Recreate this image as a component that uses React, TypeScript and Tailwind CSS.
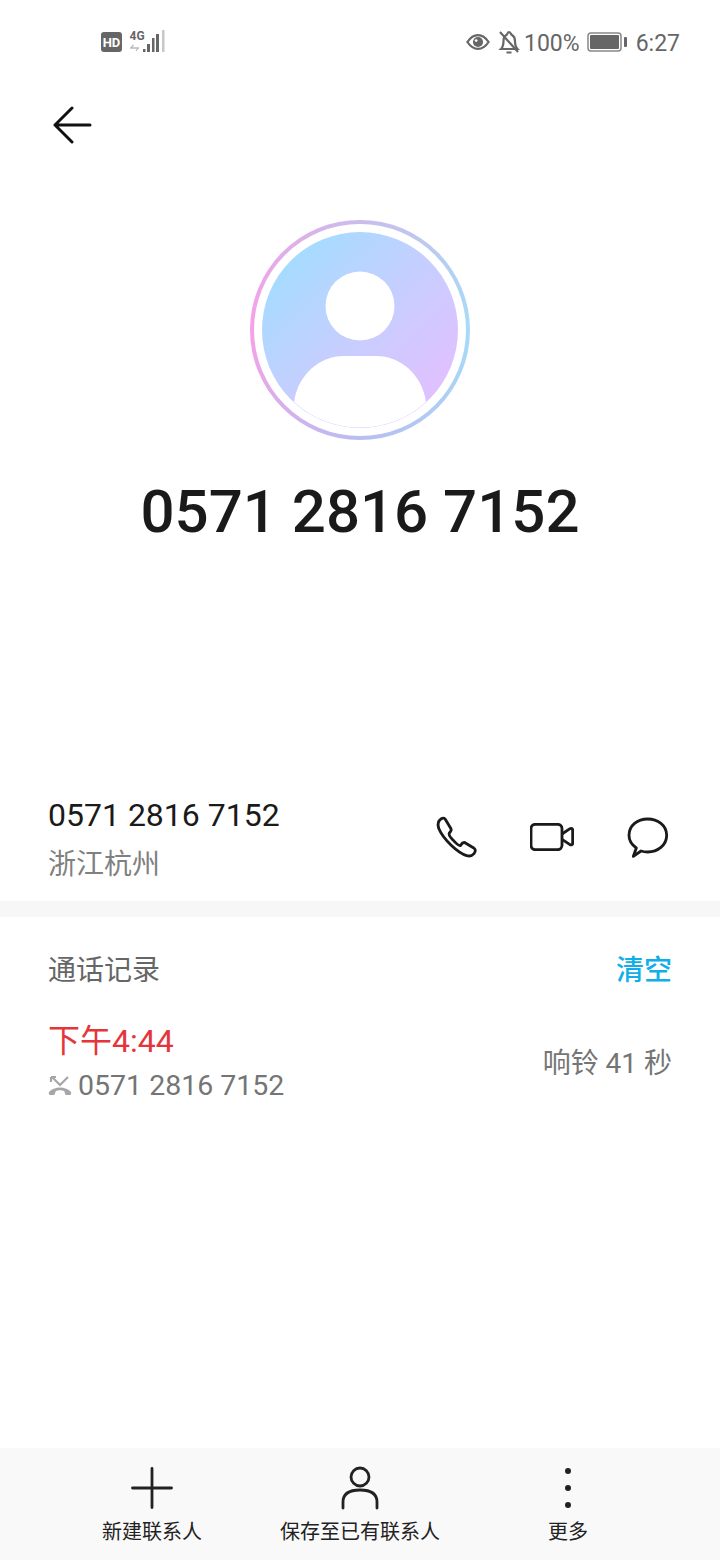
const cjk = "font-['Roboto','Noto_Sans_CJK_SC',sans-serif]";

function StatusBar() {
  return (
    <div className="flex h-[84px] items-center justify-between pl-[101px] pr-[40px] text-[#666666]">
      <div className="flex items-center gap-[7px]">
        <div className="flex h-[20px] w-[21px] items-center justify-center rounded-[3px] bg-[#666666] text-[13px] leading-none font-bold text-white">
          HD
        </div>
        <svg width="36" height="24" viewBox="0 0 36 24">
          <text x="0.500" y="9.500" fontSize="12" fontWeight="700" fill="#666666" fontFamily="Roboto">4G</text>
          <path d="M1 18h9M4.500 15l-2.500 3M7 21l2-3" stroke="#bbbbbb" strokeWidth="1.300" fill="none" />
          <rect x="14" y="19" width="2.500" height="3" fill="#666666" />
          <rect x="18" y="14" width="3" height="8" fill="#666666" />
          <rect x="23" y="8" width="2.500" height="14" fill="#666666" />
          <rect x="27" y="4" width="3" height="18" fill="#666666" />
          <rect x="33" y="0" width="2.500" height="22" fill="#c8c8c8" />
        </svg>
      </div>
      <div className="flex items-center text-[23px] leading-none">
        <svg width="24" height="18" viewBox="0 0 26 18" fill="none" className="mr-[8px]">
          <path d="M1.500 9C5 3.800 8.500 1.500 13 1.500S21 3.800 24.500 9C21 14.200 17.500 16.500 13 16.500S5 14.200 1.500 9Z" stroke="#666666" strokeWidth="2.400" />
          <circle cx="13" cy="9" r="5.500" fill="#666666" />
          <circle cx="11" cy="7.500" r="1.500" fill="#ffffff" />
        </svg>
        <svg width="22" height="26" viewBox="0 0 22 26" fill="none" stroke="#666666" strokeWidth="2.200" className="mr-[4px]">
          <path d="M3 20c2-2 2.500-4 2.500-8 0-3 1-5 3-6 1-.5 1-3 2.500-3s1.800 2.500 3 3c1.800 1 3 3 3 6 0 4 .5 6 2.500 8Z" />
          <path d="M2 3l18 20M8.500 23.500h5" />
        </svg>
        <span className={`pt-[2px] ${cjk}`}>100%</span>
        <svg width="40" height="20" viewBox="0 0 40 20" fill="none" className="mr-[9px] ml-[7px]">
          <rect x="1" y="1" width="33" height="18" rx="3" stroke="#888888" strokeWidth="1.500" />
          <rect x="3" y="3" width="29" height="14" rx="1" fill="#666666" />
          <rect x="37" y="5" width="3" height="10" rx="1" fill="#666666" />
        </svg>
        <span className={`pt-[2px] ${cjk}`}>6:27</span>
      </div>
    </div>
  );
}

function Avatar() {
  return (
    <div className="flex h-[220px] w-[220px] items-center justify-center rounded-full bg-[conic-gradient(#cbbcec,#a6dcf7_25%,#b9bdf2_50%,#f7a0e8_75%,#cbbcec)]">
      <div className="flex h-[212px] w-[212px] items-center justify-center rounded-full bg-white">
        <div className="h-[196px] w-[196px] overflow-hidden rounded-full bg-gradient-to-br from-[#96e0ff] to-[#eabaff]">
          <svg width="196" height="196" viewBox="0 0 196 196">
            <circle cx="98" cy="74" r="34.500" fill="#ffffff" />
            <path d="M32 170C36 142 58 124 82 124H114C138 124 160 142 164 170A98 98 0 0 1 32 170Z" fill="#ffffff" />
          </svg>
        </div>
      </div>
    </div>
  );
}

function ActionIcons() {
  return (
    <div className="flex items-center pr-[24px]">
      <div className="flex w-[96px] justify-center">
        <svg width="44" height="44" viewBox="40 44 132 132" fill="none" stroke="#1a1a1a" strokeWidth="8.500" strokeLinejoin="round" className="-ml-[1px]">
          <path d="M62 55C69 51 73 54 77 62L91 85C93 90 90 94 86 98C84 102 88 110 96 118C104 127 114 137 119 136C123 130 126 124 133 127L158 142C165 147 166 152 160 160C154 167 148 169 138 166C112 158 68 118 54 84C50 72 52 62 62 55Z" />
        </svg>
      </div>
      <div className="flex w-[96px] justify-center">
        <svg width="44" height="28" viewBox="331 69 132 84" fill="none" stroke="#1a1a1a" strokeWidth="8.500" strokeLinejoin="round">
          <rect x="334" y="73" width="93" height="76" rx="13" />
          <path d="M427 102L451 86C455 84 459 86 459 90V130C459 134 455 136 451 134L427 118" />
        </svg>
      </div>
      <div className="flex w-[96px] justify-center">
        <svg width="42" height="42" viewBox="622 48 126 126" fill="none" stroke="#1a1a1a" strokeWidth="8.500" strokeLinejoin="round" className="mt-[2px]">
          <path d="M684 54C714 54 741 73 741 103C741 133 714 153 684 153C677 153 670 152 664 150L641 166L650 141C637 132 628 118 628 103C628 73 654 54 684 54Z" />
        </svg>
      </div>
    </div>
  );
}

function BottomAction({ label, children }: { label: string; children: React.ReactNode }) {
  return (
    <div className="flex flex-col items-center">
      <div className="flex h-[44px] items-center justify-center">{children}</div>
      <span className="mt-[8px] text-[20px] leading-[28px] text-[#222222]">{label}</span>
    </div>
  );
}

export default function App() {
  return (
    <div className={`flex h-[1560px] w-[720px] flex-col bg-white ${cjk}`}>
      <StatusBar />

      <div className="flex h-[80px] items-center pl-[53px] pt-[1px]">
        <svg width="40" height="40" viewBox="0 0 40 40" fill="none" stroke="#111111" strokeWidth="3" strokeLinecap="round" strokeLinejoin="round">
          <path d="M37 20H3M19 3L2 20L19 37" />
        </svg>
      </div>

      <div className="mt-[56px] flex flex-col items-center">
        <Avatar />
        <h1 className="mt-[37px] text-[60px] leading-[70px] font-medium text-[#1a1a1a]">0571 2816 7152</h1>
      </div>

      <div className="mt-[248px] flex h-[106px] items-start justify-between pl-[48px]">
        <div>
          <div className="text-[32px] leading-[40px] text-[#1a1a1a]">0571 2816 7152</div>
          <div className="mt-[10px] text-[28px] leading-[40px] text-[#808080]">浙江杭州</div>
        </div>
        <div className="pt-[20px]">
          <ActionIcons />
        </div>
      </div>

      <div className="h-[16px] bg-[#f7f7f7]" />

      <div className="mt-[34px] flex items-center justify-between px-[48px] text-[28px] leading-[40px]">
        <span className="text-[#666666]">通话记录</span>
        <span className="font-medium text-[#10aeea]">清空</span>
      </div>

      <div className="mt-[28px] flex items-center justify-between px-[48px]">
        <div>
          <div className="text-[32px] leading-[44px] text-[#e5343a]">下午4:44</div>
          <div className="mt-[5px] flex items-center text-[28.500px] leading-[36px] text-[#757575]">
            <svg width="24" height="22" viewBox="0 0 24 22" className="mr-[6px]">
              <path d="M4 2L12 10L20 2" fill="none" stroke="#a6a6a6" strokeWidth="2.200" />
              <path d="M3 2H8M3 2V7" fill="none" stroke="#a6a6a6" strokeWidth="2.200" />
              <path d="M1 17C6 11 18 11 23 17C23.500 18 23 20 22 20H18C17 20 17 17 16 16C14 15 10 15 8 16C7 17 7 20 6 20H2C1 20 0.500 18 1 17Z" fill="#a6a6a6" />
            </svg>
            0571 2816 7152
          </div>
        </div>
        <span className="pt-[4px] text-[28px] leading-[40px] text-[#757575]">响铃 41 秒</span>
      </div>

      <div className="mt-auto grid h-[112px] grid-cols-3 bg-[#f9f9f9] px-[48px] pt-[18px]">
        <BottomAction label="新建联系人">
          <svg width="44" height="44" viewBox="0 0 44 44" fill="none" stroke="#222222" strokeWidth="2.800" strokeLinecap="round">
            <path d="M22 2.500V41.500M2.500 22H41.500" />
          </svg>
        </BottomAction>
        <BottomAction label="保存至已有联系人">
          <svg width="44" height="44" viewBox="0 0 44 44" fill="none" stroke="#222222" strokeWidth="2.800" strokeLinecap="round">
            <circle cx="22" cy="11" r="9" />
            <path d="M5 42V36C5 27 13 24 22 24S39 27 39 36V42" />
          </svg>
        </BottomAction>
        <BottomAction label="更多">
          <svg width="44" height="44" viewBox="0 0 44 44" fill="#222222">
            <circle cx="22" cy="5" r="3" />
            <circle cx="22" cy="22" r="3" />
            <circle cx="22" cy="39" r="3" />
          </svg>
        </BottomAction>
      </div>
    </div>
  );
}
